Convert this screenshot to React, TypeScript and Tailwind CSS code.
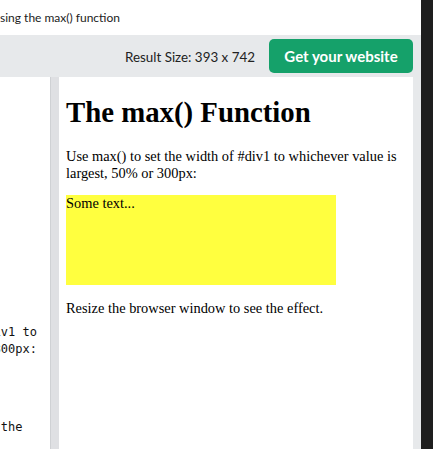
export default function App() {
  const editorLines = [
    { y: 'mt-[247px]', text: '<p>Use max() to set the width of #div1 to' },
    { y: '', text: 'whichever value is largest, 50% or 300px:' },
    { y: 'mt-[61px]', text: '<p>Resize the  ' },
  ];

  return (
    <div className="flex h-[449px] w-[433px] overflow-hidden bg-[#1e1e1e]">
      <div className="flex w-[421px] flex-col bg-[#e7e9eb]">
        {/* title bar */}
        <div className="flex h-[35px] items-center bg-white text-[12px] text-[#222] [font-family:Lato,sans-serif]">
          sing the max() function
        </div>

        {/* toolbar */}
        <div className="flex h-[42px] items-start justify-end pr-[8px] pt-[4px]">
          <span className="mt-[8px] mr-[14px] text-[13.4px] text-[#222] [font-family:Lato,sans-serif]">
            Result Size: 393 x 742
          </span>
          <button className="h-[34px] w-[144px] rounded-[5px] bg-[#15a16a] text-[15px] font-bold text-white [font-family:Lato,sans-serif]">
            Get your website
          </button>
        </div>

        {/* panels */}
        <div className="flex flex-1 overflow-hidden">
          <div className="w-[50px] overflow-hidden bg-white pr-[13px] text-[12px] leading-[17px] text-[#111] [font-family:'DejaVu_Sans_Mono',monospace]">
            {editorLines.map((l, i) => (
              <div key={i} className={`flex justify-end whitespace-pre ${l.y}`}>
                {l.text}
              </div>
            ))}
          </div>
          <div className="w-[9px] border-l border-[#cfd1d4] bg-[#dfe0e3]" />
          <div className="w-[354px] bg-white px-[7px] text-[14.4px] text-black [font-family:'Liberation_Serif',serif]">
            <h1 className="mt-[19px] mb-[19px] text-[28.8px] font-bold leading-[33px]">
              The max() Function
            </h1>
            <p className="leading-[16.5px]">
              Use max() to set the width of #div1 to whichever value is largest, 50% or 300px:
            </p>
            <div className="mt-[14.4px] h-[90px] w-[270px] bg-[#ffff3f] leading-[16.5px]">
              Some text...
            </div>
            <p className="mt-[14.4px] leading-[16.5px]">
              Resize the browser window to see the effect.
            </p>
          </div>
        </div>
      </div>
    </div>
  );
}
